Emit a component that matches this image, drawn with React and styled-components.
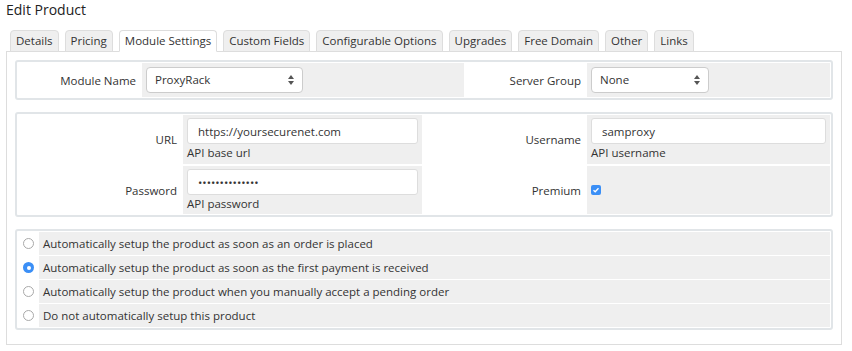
import React from 'react';
import styled, { createGlobalStyle } from 'styled-components';

const GlobalStyle = createGlobalStyle`
    body{
        margin: 0;
        background: #fff;
        font-family: "Open Sans", "Liberation Sans", sans-serif;
        font-size: 11.5px;
        color: #333;
    }
`;

const Page = styled.div`
    padding: 0 10px 0 6px;
`;

const Title = styled.h2`
    margin: 0;
    height: 30px;
    font-size: 14px;
    font-weight: 400;
    line-height: 20px;
    color: #222;
`;

const TabBar = styled.ul`
    display: flex;
    gap: 6px;
    margin: 0 0 -1px;
    padding: 0 0 0 4px;
    list-style: none;
    position: relative;
    z-index: 1;
`;

const Tab = styled.li`
    height: 20px;
    line-height: 20px;
    padding: 0 5px;
    border: 1px solid #ddd;
    border-bottom-color: ${p => p.active ? '#fff' : '#ddd'};
    border-radius: 4px 4px 0 0;
    background: ${p => p.active ? '#fff' : '#efefef'};
    color: #333;
`;

const Panel = styled.div`
    border: 1px solid #ddd;
    padding: 8px 8px 14px 8px;
    background: #fff;
`;

const FormBox = styled.div`
    display: grid;
    grid-template-columns: ${p => p.cols};
    row-gap: ${p => p.gap || '2px'};
    border: 2px solid #e1e5e8;
    border-radius: 3px;
    padding: 1px;
    margin-top: ${p => p.first ? '0' : '12px'};
`;

const Label = styled.div`
    display: flex;
    align-items: center;
    justify-content: flex-end;
    padding-right: 6px;
    height: ${p => p.h || '34px'};
    background: #fff;
`;

const Field = styled.div`
    display: flex;
    flex-direction: column;
    justify-content: ${p => p.top ? 'flex-start' : 'center'};
    padding: ${p => p.top ? '3px 4px 0' : '0 4px'};
    height: ${p => p.h || '34px'};
    box-sizing: border-box;
    background: #efefef;
`;

const SelectBox = styled.div`
    position: relative;
    width: ${p => p.w};
    height: 26px;
    line-height: 24px;
    padding-left: 8px;
    box-sizing: border-box;
    background: #fff;
    border: 1px solid #ccc;
    border-radius: 4px;
    color: #333;
`;

const Arrows = styled.svg`
    position: absolute;
    right: 8px;
    top: 7px;
`;

const TextInput = styled.div`
    width: ${p => p.w};
    height: 26px;
    line-height: 25px;
    padding-left: 10px;
    box-sizing: border-box;
    background: #fff;
    border: 1px solid #ddd;
    border-radius: 3px;
    color: #333;
`;

const Help = styled.div`
    line-height: 18px;
`;

const Check = styled.span`
    display: inline-flex;
    align-items: center;
    justify-content: center;
    width: 10px;
    height: 10px;
    border-radius: 2px;
    background: #3b8ff6;
`;

const RadioCell = styled.div`
    display: flex;
    align-items: center;
    justify-content: center;
    height: 23px;
    background: #fff;
`;

const Radio = styled.span`
    display: inline-flex;
    align-items: center;
    justify-content: center;
    width: 11px;
    height: 11px;
    box-sizing: border-box;
    border-radius: 50%;
    border: ${p => p.checked ? 'none' : '1px solid #a9a9a9'};
    background: ${p => p.checked ? '#3b8ff6' : '#fff'};
    &::after{
        content: '';
        display: ${p => p.checked ? 'block' : 'none'};
        width: 4px;
        height: 4px;
        border-radius: 50%;
        background: #fff;
    }
`;

const RadioText = styled.div`
    display: flex;
    align-items: center;
    height: 23px;
    padding-left: 4px;
    background: #efefef;
`;

const tabs = ['Details', 'Pricing', 'Module Settings', 'Custom Fields', 'Configurable Options', 'Upgrades', 'Free Domain', 'Other', 'Links'];

const options = [
    'Automatically setup the product as soon as an order is placed',
    'Automatically setup the product as soon as the first payment is received',
    'Automatically setup the product when you manually accept a pending order',
    'Do not automatically setup this product'
];

const Select = ({ w, children }) => (
    <SelectBox w={w}>
        {children}
        <Arrows width="6" height="10" viewBox="0 0 6 10">
            <path d="M3 0 L6 4 H0 Z M3 10 L6 6 H0 Z" fill="#555" />
        </Arrows>
    </SelectBox>
);

export default function App(){
    return(
        <Page>
            <GlobalStyle />
            <Title>Edit Product</Title>
            <TabBar>
                {tabs.map(t => <Tab key={t} active={t === 'Module Settings'}>{t}</Tab>)}
            </TabBar>
            <Panel>
                <FormBox first cols="124px 322px 123px 1fr">
                    <Label>Module Name</Label>
                    <Field><Select w="157px">ProxyRack</Select></Field>
                    <Label>Server Group</Label>
                    <Field><Select w="118px">None</Select></Field>
                </FormBox>
                <FormBox cols="165px 239px 165px 1fr">
                    <Label h="49px">URL</Label>
                    <Field top h="49px">
                        <TextInput w="231px">https://yoursecurenet.com</TextInput>
                        <Help>API base url</Help>
                    </Field>
                    <Label h="49px">Username</Label>
                    <Field top h="49px">
                        <TextInput w="235px">samproxy</TextInput>
                        <Help>API username</Help>
                    </Field>
                    <Label h="48px">Password</Label>
                    <Field top h="48px">
                        <TextInput w="231px">••••••••••••••</TextInput>
                        <Help>API password</Help>
                    </Field>
                    <Label h="48px">Premium</Label>
                    <Field h="48px">
                        <Check>
                            <svg width="8" height="8" viewBox="0 0 8 8">
                                <path d="M1.5 4.2 L3.2 5.8 L6.5 2.2" stroke="#fff" strokeWidth="1.3" fill="none" />
                            </svg>
                        </Check>
                    </Field>
                </FormBox>
                <FormBox cols="21px 1fr" gap="1px">
                    {options.map((o, i) => (
                        <React.Fragment key={o}>
                            <RadioCell><Radio checked={i === 1} /></RadioCell>
                            <RadioText>{o}</RadioText>
                        </React.Fragment>
                    ))}
                </FormBox>
            </Panel>
        </Page>
    );
}
